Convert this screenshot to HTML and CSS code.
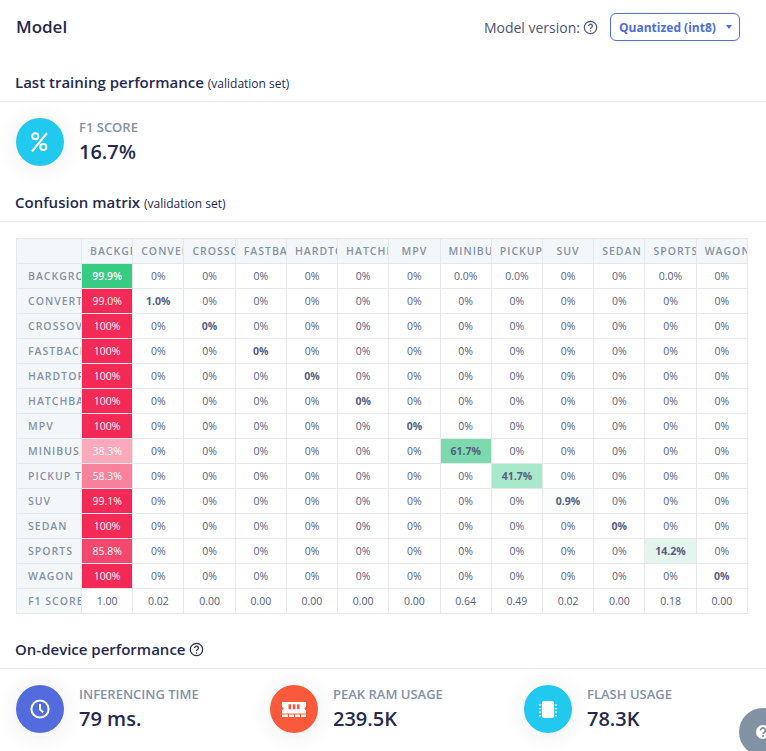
FILE: index.html
```html
<!DOCTYPE html>
<html lang="en">
<head>
  <meta charset="UTF-8">
  <title>Model</title>
  <link rel="stylesheet" href="styles.css">
</head>
<body>
  <div class="top">
    <h1>Model</h1>
    <div class="version">
      <span>Model version:</span>
      <svg class="help" viewBox="0 0 16 16"><circle cx="8" cy="8" r="6.6"/><path d="M6 6.400a2 2 0 1 1 3.100 1.700c-.7.4-1.100.8-1.100 1.600"/><circle class="dot" cx="8" cy="11.700" r=".8"/></svg>
      <button class="select">Quantized (int8)<i class="caret"></i></button>
    </div>
  </div>

  <h2 class="first">Last training performance <small>(validation set)</small></h2>
  <div class="stats">
    <div class="stat">
      <div class="badge cyan">
        <svg viewBox="0 0 24 24"><circle cx="7.300" cy="6.300" r="3"/><circle cx="15.300" cy="17" r="3"/><path d="M19 3 4 21.500"/></svg>
      </div>
      <div>
        <div class="stat-label">F1 SCORE</div>
        <div class="stat-value">16.7%</div>
      </div>
    </div>
  </div>

  <h2>Confusion matrix <small>(validation set)</small></h2>
  <div class="matrix-wrap">
    <table class="matrix">
      <tr class="head">
        <th></th><th>BACKGROUND</th><th>CONVERTIBLE</th><th>CROSSOVER</th><th>FASTBACK</th><th>HARDTOP</th><th>HATCHBACK</th><th>MPV</th><th>MINIBUS</th><th>PICKUP TRUCK</th><th>SUV</th><th>SEDAN</th><th>SPORTS</th><th>WAGON</th>
      </tr>
      <tr><th>BACKGROUND</th><td class="g100 hi">99.9%</td><td>0%</td><td>0%</td><td>0%</td><td>0%</td><td>0%</td><td>0%</td><td>0.0%</td><td>0.0%</td><td>0%</td><td>0%</td><td>0.0%</td><td>0%</td></tr>
      <tr><th>CONVERTIBLE</th><td class="r100">99.0%</td><td class="g1 b">1.0%</td><td>0%</td><td>0%</td><td>0%</td><td>0%</td><td>0%</td><td>0%</td><td>0%</td><td>0%</td><td>0%</td><td>0%</td><td>0%</td></tr>
      <tr><th>CROSSOVER</th><td class="r100">100%</td><td>0%</td><td class="b">0%</td><td>0%</td><td>0%</td><td>0%</td><td>0%</td><td>0%</td><td>0%</td><td>0%</td><td>0%</td><td>0%</td><td>0%</td></tr>
      <tr><th>FASTBACK</th><td class="r100">100%</td><td>0%</td><td>0%</td><td class="b">0%</td><td>0%</td><td>0%</td><td>0%</td><td>0%</td><td>0%</td><td>0%</td><td>0%</td><td>0%</td><td>0%</td></tr>
      <tr><th>HARDTOP</th><td class="r100">100%</td><td>0%</td><td>0%</td><td>0%</td><td class="b">0%</td><td>0%</td><td>0%</td><td>0%</td><td>0%</td><td>0%</td><td>0%</td><td>0%</td><td>0%</td></tr>
      <tr><th>HATCHBACK</th><td class="r100">100%</td><td>0%</td><td>0%</td><td>0%</td><td>0%</td><td class="b">0%</td><td>0%</td><td>0%</td><td>0%</td><td>0%</td><td>0%</td><td>0%</td><td>0%</td></tr>
      <tr><th>MPV</th><td class="r100">100%</td><td>0%</td><td>0%</td><td>0%</td><td>0%</td><td>0%</td><td class="b">0%</td><td>0%</td><td>0%</td><td>0%</td><td>0%</td><td>0%</td><td>0%</td></tr>
      <tr><th>MINIBUS</th><td class="r38">38.3%</td><td>0%</td><td>0%</td><td>0%</td><td>0%</td><td>0%</td><td>0%</td><td class="g62 b">61.7%</td><td>0%</td><td>0%</td><td>0%</td><td>0%</td><td>0%</td></tr>
      <tr><th>PICKUP TRUCK</th><td class="r58">58.3%</td><td>0%</td><td>0%</td><td>0%</td><td>0%</td><td>0%</td><td>0%</td><td>0%</td><td class="g42 b">41.7%</td><td>0%</td><td>0%</td><td>0%</td><td>0%</td></tr>
      <tr><th>SUV</th><td class="r100">99.1%</td><td>0%</td><td>0%</td><td>0%</td><td>0%</td><td>0%</td><td>0%</td><td>0%</td><td>0%</td><td class="g1 b">0.9%</td><td>0%</td><td>0%</td><td>0%</td></tr>
      <tr><th>SEDAN</th><td class="r100">100%</td><td>0%</td><td>0%</td><td>0%</td><td>0%</td><td>0%</td><td>0%</td><td>0%</td><td>0%</td><td>0%</td><td class="b">0%</td><td>0%</td><td>0%</td></tr>
      <tr><th>SPORTS</th><td class="r86">85.8%</td><td>0%</td><td>0%</td><td>0%</td><td>0%</td><td>0%</td><td>0%</td><td>0%</td><td>0%</td><td>0%</td><td>0%</td><td class="g14 b">14.2%</td><td>0%</td></tr>
      <tr><th>WAGON</th><td class="r100">100%</td><td>0%</td><td>0%</td><td>0%</td><td>0%</td><td>0%</td><td>0%</td><td>0%</td><td>0%</td><td>0%</td><td>0%</td><td>0%</td><td class="b">0%</td></tr>
      <tr><th>F1 SCORE</th><td>1.00</td><td>0.02</td><td>0.00</td><td>0.00</td><td>0.00</td><td>0.00</td><td>0.00</td><td>0.64</td><td>0.49</td><td>0.02</td><td>0.00</td><td>0.18</td><td>0.00</td></tr>
    </table>
  </div>

  <h2>On-device performance
    <svg class="help dark" viewBox="0 0 16 16"><circle cx="8" cy="8" r="6.600"/><path d="M6 6.400a2 2 0 1 1 3.100 1.700c-.7.4-1.100.8-1.100 1.600"/><circle class="dot" cx="8" cy="11.700" r=".8"/></svg>
  </h2>
  <div class="stats">
    <div class="stat">
      <div class="badge blue">
        <svg viewBox="0 0 24 24"><circle cx="12" cy="12" r="8.600"/><path d="M12 7v5.400l3.200 3"/></svg>
      </div>
      <div>
        <div class="stat-label">INFERENCING TIME</div>
        <div class="stat-value">79 ms.</div>
      </div>
    </div>
    <div class="stat">
      <div class="badge orange">
        <svg class="ram" viewBox="0 0 24 15">
          <path d="M0 0h24v5a1.500 1.500 0 0 0 0 3v3.500H0V8a1.500 1.500 0 0 0 0-3z"/>
          <path d="M0 12.500h6v2.500H0zM7 12.500h5v2.500H7zM13 12.500h5v2.500h-5zM19 12.500h5v2.500h-5z"/>
          <path class="cut" d="M6.500 2.300h2.500v5H6.500zM10.800 2.300h2.500v5h-2.500zM15.100 2.300h2.500v5h-2.500z"/>
        </svg>
      </div>
      <div>
        <div class="stat-label">PEAK RAM USAGE</div>
        <div class="stat-value">239.5K</div>
      </div>
    </div>
    <div class="stat">
      <div class="badge cyan">
        <svg class="chip" viewBox="0 0 18 17">
          <rect x="3" y="0" width="12" height="17" rx="2"/>
          <path d="M0 3.500h2.200v1.200H0zM0 7h2.200v1.200H0zM0 10.500h2.200v1.200H0zM0 14h2.200v1.200H0zM15.800 3.500H18v1.200h-2.200zM15.800 7H18v1.200h-2.200zM15.800 10.500H18v1.200h-2.200zM15.800 14H18v1.200h-2.200z"/>
        </svg>
      </div>
      <div>
        <div class="stat-label">FLASH USAGE</div>
        <div class="stat-value">78.3K</div>
      </div>
    </div>
  </div>

  <div class="help-fab">
    <svg viewBox="0 0 14 14"><circle class="disc" cx="7" cy="7" r="7"/><path d="M4.600 5.400a2.400 2.400 0 1 1 3.700 2c-.8.5-1.300.8-1.300 1.500"/><circle class="dot" cx="7" cy="11" r="1.100"/></svg>
  </div>
</body>
</html>
```

FILE: styles.css
```css
html, body {
  height: 751px;
  overflow: hidden;
}
body {
  margin: 0;
  background: #fff;
  color: #252a50;
  font-family: "Open Sans", sans-serif;
  position: relative;
}
.top {
  display: flex;
  justify-content: space-between;
  align-items: center;
  height: 28px;
  padding: 13px 26px 1px 16px;
}
h1 {
  margin: 0;
  font-size: 17px;
  font-weight: 600;
  line-height: 28px;
}
.version {
  display: flex;
  align-items: center;
  font-size: 14px;
  color: #4a5578;
}
.help {
  width: 15px;
  height: 15px;
  margin-left: 3px;
  fill: none;
  stroke: #4a5578;
  stroke-width: 1.3;
}
.help .dot {
  fill: #4a5578;
  stroke: none;
}
.help.dark {
  stroke: #252a50;
  vertical-align: -2px;
  margin-left: 0;
}
.help.dark .dot {
  fill: #252a50;
}
.select {
  display: flex;
  align-items: center;
  justify-content: space-between;
  height: 28px;
  width: 130px;
  margin-left: 12px;
  padding: 0 7px 0 8px;
  background: #fff;
  border: 1px solid #4f6ce1;
  border-radius: 6px;
  color: #4f6ce1;
  font-family: inherit;
  font-size: 12px;
  font-weight: 700;
  white-space: nowrap;
}
.caret {
  border-top: 4px solid #4f6ce1;
  border-left: 3.5px solid transparent;
  border-right: 3.5px solid transparent;
}
h2 {
  margin: 0;
  padding: 0 15px 8px;
  height: 22px;
  font-size: 15px;
  font-weight: 600;
  line-height: 22px;
  border-bottom: 1px solid #e6e8ec;
}
h2.first {
  margin-top: 29px;
}
h2 small {
  font-size: 12px;
  font-weight: 400;
}
.stats {
  display: flex;
  padding: 16px 16px 25px;
}
.stat {
  display: flex;
  flex: none;
  align-items: center;
  width: 254px;
}
.badge {
  display: flex;
  align-items: center;
  justify-content: center;
  flex: none;
  width: 48px;
  height: 48px;
  margin-right: 15px;
  border-radius: 50%;
  box-shadow: 0 2px 24px rgba(40, 60, 90, 0.09);
}
.badge svg {
  width: 24px;
  height: 24px;
  fill: none;
  stroke: #fff;
  stroke-width: 2;
}
.badge svg.ram {
  width: 24px;
  height: 15px;
  fill: #fff;
  stroke: none;
}
.badge svg.chip {
  width: 18px;
  height: 17px;
  fill: #fff;
  stroke: none;
}
.badge .cut {
  fill: #fa5a3c;
}
.cyan { background: #22c9ef; }
.blue { background: #526cdd; }
.orange { background: #fa5a3c; }
.stat-label {
  font-size: 13px;
  font-weight: 600;
  line-height: 17px;
  color: #8492a6;
}
.stat-value {
  margin-top: 2px;
  font-size: 20px;
  font-weight: 600;
  line-height: 28px;
  color: #252a50;
}
.matrix-wrap {
  padding: 16px 18px 25px 16px;
  height: 375px;
}
.matrix {
  width: 732px;
  height: 375px;
  table-layout: fixed;
  border-collapse: collapse;
  font-size: 10.5px;
  color: #56607f;
}
.matrix th, .matrix td {
  height: 24px;
  padding: 0 8px;
  border: 1px solid #e6e8ec;
  overflow: hidden;
  white-space: nowrap;
  text-align: center;
}
.matrix th {
  background: #f4f7fa;
  color: #8492a6;
  font-size: 10.5px;
  font-weight: 600;
  letter-spacing: 1px;
}
.matrix tr > :first-child {
  box-sizing: border-box;
  width: 65px;
  padding: 0 0 0 11px;
  text-align: left;
}
.matrix .b { font-weight: 700; color: #56607f; }
.matrix .hi { font-weight: 600; }
.matrix .g100 { background: #38cb82; color: #fff; }
.matrix .g62 { background: #7dd9ae; }
.matrix .g42 { background: #a9e8ca; }
.matrix .g14 { background: #e3f5ec; }
.matrix .g1 { background: #fbfdfc; }
.matrix .r100 { background: #f32a56; color: #fff; }
.matrix .r86 { background: #f4476d; color: #fff; }
.matrix .r58 { background: #f8819b; color: #fff; }
.matrix .r38 { background: #fbaabb; color: #fff; }
.help-fab {
  position: absolute;
  left: 739px;
  top: 708px;
  display: flex;
  align-items: center;
  justify-content: center;
  width: 48px;
  height: 48px;
  border-radius: 50%;
  background: #8192a5;
}
.help-fab svg {
  width: 14px;
  height: 14px;
  fill: none;
  stroke: #8192a5;
  stroke-width: 1.8;
}
.help-fab .disc {
  fill: #fff;
  stroke: none;
}
.help-fab .dot {
  fill: #8192a5;
  stroke: none;
}
```
